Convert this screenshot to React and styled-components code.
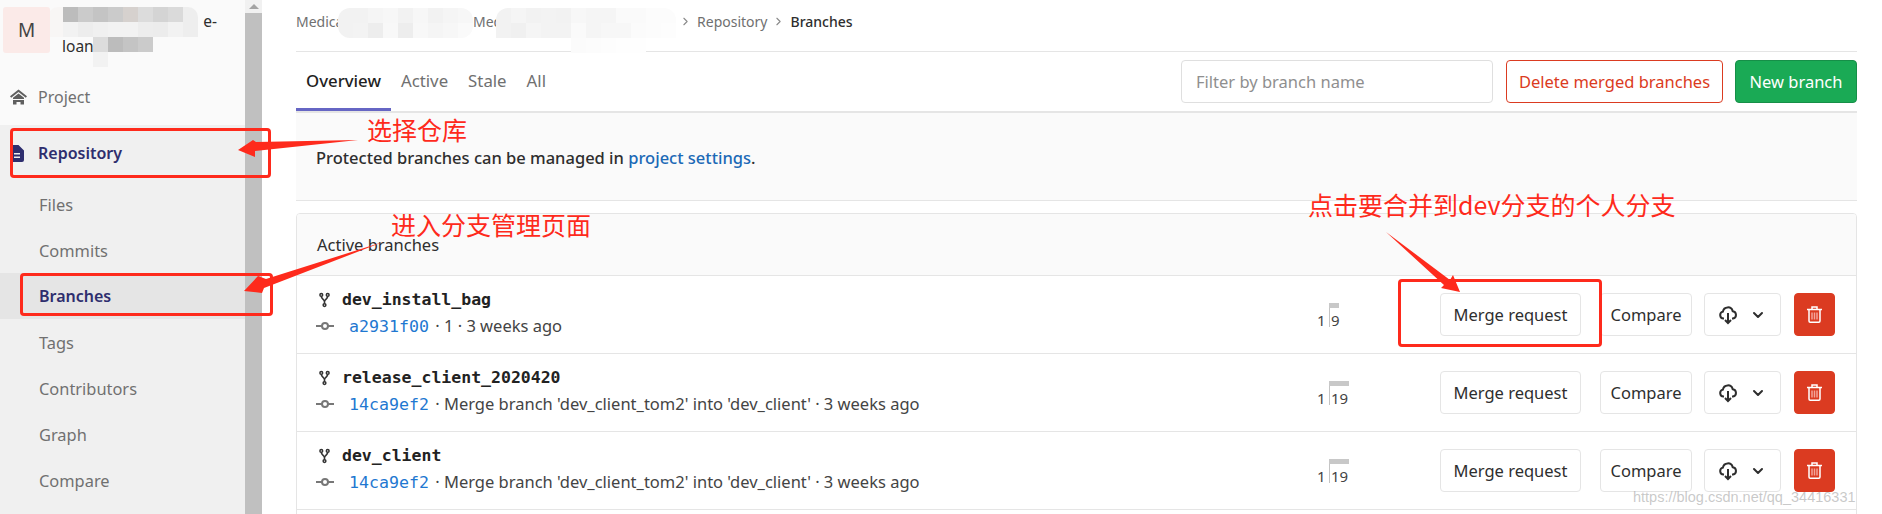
import React from 'react';
import styled, { createGlobalStyle } from 'styled-components';
import { ChevronDown, ChevronRight } from 'lucide-react';

const GlobalStyle = createGlobalStyle`
  html, body {
    margin: 0;
    padding: 0;
    background: #fff;
    overflow: hidden;
  }
  * { box-sizing: border-box; }
`;

const Page = styled.div`
  position: relative;
  display: flex;
  width: 1882px;
  height: 514px;
  overflow: hidden;
  font-family: "Noto Sans", "Open Sans", sans-serif;
  font-size: 16.5px;
  color: #2e2e2e;
`;

const Sidebar = styled.aside`
  width: 245px;
  flex-shrink: 0;
  background: #f0f0f0;
  display: flex;
  flex-direction: column;
`;

const SidebarTop = styled.div`
  height: 125px;
  background: #fafafa;
  padding: 7px 0 0 3px;
`;

const ProjectHead = styled.div`
  display: flex;
  gap: 12px;
  height: 46px;
`;

const Avatar = styled.div`
  position: relative;
  z-index: 1;
  width: 47px;
  height: 46px;
  background: #fbeae8;
  border-radius: 3px;
  display: flex;
  align-items: center;
  justify-content: center;
  font-size: 19px;
  color: #444;
`;

const ProjectName = styled.div`
  width: 155px;
  line-height: 25px;
  padding-top: 2px;
  font-size: 15.5px;
  color: #2e2e2e;
  span { display: block; }
  span:first-child { text-align: right; }
`;

const NavTop = styled.div`
  display: flex;
  align-items: center;
  gap: 11px;
  padding-left: 7px;
  margin-top: 33px;
  font-size: 16px;
  line-height: 22px;
  color: #707070;
`;

const NavHead = styled.div`
  display: flex;
  align-items: center;
  gap: 14px;
  height: 56px;
  padding-left: 10px;
  font-size: 16px;
  font-weight: 600;
  color: #2e2e6e;
`;

const NavList = styled.div`
  display: flex;
  flex-direction: column;
`;

const NavItem = styled.div`
  height: 46px;
  display: flex;
  align-items: center;
  padding-left: 39px;
  font-size: ${p => (p.$active ? 16 : 16.4)}px;
  color: ${p => (p.$active ? '#2e2e6e' : '#707070')};
  font-weight: ${p => (p.$active ? 600 : 400)};
  background: ${p => (p.$active ? '#e5e5e5' : 'transparent')};
`;

const ScrollBar = styled.div`
  width: 17px;
  flex-shrink: 0;
  background: #c0c0c0;
  display: flex;
  flex-direction: column;
`;

const ScrollCap = styled.div`
  height: 13px;
  background: #f1f1f1;
  display: flex;
  align-items: center;
  justify-content: center;
  &::before {
    content: "";
    border-left: 5px solid transparent;
    border-right: 5px solid transparent;
    border-bottom: 5px solid #a3a3a3;
  }
`;

const Main = styled.main`
  width: 1561px;
  margin-left: 34px;
  flex-shrink: 0;
`;

const Breadcrumb = styled.div`
  height: 52px;
  display: flex;
  align-items: center;
  padding-bottom: 8px;
  border-bottom: 1px solid #e5e5e5;
  font-size: 14px;
  color: #707070;
`;

const Crumb = styled.span`
  display: inline-block;
  margin-left: ${p => p.$left || 0}px;
  color: ${p => (p.$current ? '#2e2e2e' : '#707070')};
  font-weight: ${p => (p.$current ? 500 : 400)};
`;

const CrumbArrow = styled.span`
  display: inline-flex;
  color: #8a8a8a;
  margin: 0 5px;
`;

const TabBar = styled.div`
  height: 61px;
  display: flex;
  align-items: flex-start;
  border-bottom: 2px solid #e5e5e5;
`;

const Tabs = styled.nav`
  display: flex;
  flex: 1;
  height: 59px;
`;

const Tab = styled.div`
  height: 59px;
  padding: 17px 10px 0;
  font-size: 16.8px;
  line-height: 24px;
  color: ${p => (p.$active ? '#1f1f1f' : '#707070')};
  font-weight: ${p => (p.$active ? 500 : 400)};
  border-bottom: ${p => (p.$active ? '3px solid #6666c4' : 'none')};
`;

const Tools = styled.div`
  display: flex;
  padding-top: 8px;
`;

const Filter = styled.input`
  width: 312px;
  height: 43px;
  border: 1px solid #dfdfdf;
  border-radius: 4px;
  padding: 0 14px;
  font: inherit;
  margin-right: 13px;
  outline: none;
  &::placeholder { color: #8f8f8f; opacity: 1; }
`;

const ToolButton = styled.button`
  height: 43px;
  width: ${p => p.$width}px;
  margin-left: ${p => p.$gap || 0}px;
  border-radius: 4px;
  font: inherit;
  padding: 0;
  background: ${p => (p.$fill ? '#1aaa55' : '#fff')};
  color: ${p => (p.$fill ? '#fff' : '#db3b21')};
  border: 1px solid ${p => (p.$fill ? '#168f48' : '#db3b21')};
`;

const InfoBar = styled.div`
  height: 88px;
  background: #fafafa;
  border-bottom: 1px solid #e5e5e5;
  padding: 33px 0 0 20px;
  line-height: 24px;
  font-weight: 500;
  color: #2e2e2e;
  a { color: #1b69b6; text-decoration: none; }
`;

const Card = styled.section`
  margin-top: 12px;
  border: 1px solid #e5e5e5;
  border-radius: 4px;
  overflow: hidden;
`;

const CardHead = styled.div`
  height: 62px;
  background: #fafafa;
  border-bottom: 1px solid #e5e5e5;
  padding: 19px 0 0 20px;
  line-height: 24px;
  color: #2e2e2e;
`;

const Row = styled.div`
  height: 78px;
  display: flex;
  align-items: center;
  padding: 0 21px 0 22px;
  border-bottom: 1px solid #e5e5e5;
`;

const BranchInfo = styled.div`
  flex: 1;
  display: flex;
  flex-direction: column;
  gap: 2px;
  margin-top: -4px;
`;

const BranchLine = styled.div`
  display: flex;
  align-items: center;
  height: 24px;
  gap: 12px;
`;

const BranchName = styled.span`
  font-family: "DejaVu Sans Mono", "Liberation Mono", monospace;
  font-weight: 700;
  font-size: 16.5px;
  color: #222;
`;

const CommitLine = styled.div`
  display: flex;
  align-items: center;
  height: 24px;
  margin-left: -3px;
  gap: 15px;
  color: #444;
`;

const Sha = styled.span`
  font-family: "DejaVu Sans Mono", "Liberation Mono", monospace;
  font-size: 16.6px;
  margin-right: 2px;
  color: #1f78d1;
`;

const Divergence = styled.div`
  position: relative;
  width: 34px;
  height: 24px;
  margin-right: 89px;
  padding-top: 10px;
  font-size: 15px;
  line-height: 14px;
  display: flex;
  color: #444;
  letter-spacing: -.2px;
`;

const Behind = styled.span`
  width: 12px;
`;

const Ahead = styled.span`
  border-left: 1px solid #c4c4c4;
  padding-left: 1px;
  margin-top: -10px;
  padding-top: 10px;
  &::before {
    content: "";
    position: absolute;
    top: 0;
    left: 12px;
    height: 5px;
    width: ${p => p.$bar}px;
    background: #c8c8c8;
  }
`;

const Actions = styled.div`
  display: flex;
  align-items: center;
`;

const Action = styled.button`
  height: 43px;
  width: ${p => p.$width}px;
  margin-left: ${p => p.$gap || 0}px;
  display: flex;
  align-items: center;
  justify-content: center;
  gap: 13px;
  border-radius: 4px;
  border: 1px solid ${p => (p.$danger ? '#db3b21' : '#e5e5e5')};
  background: ${p => (p.$danger ? '#db3b21' : '#fff')};
  color: #2e2e2e;
  font: inherit;
  padding: 0;
`;

const Annotations = styled.svg`
  position: absolute;
  left: 0;
  top: 0;
  pointer-events: none;
`;

const RedBox = styled.div`
  position: absolute;
  left: ${p => p.$x}px;
  top: ${p => p.$y}px;
  width: ${p => p.$w}px;
  height: ${p => p.$h}px;
  border: 3px solid #fe2a1c;
  border-radius: 4px;
`;

const RedNote = styled.div`
  position: absolute;
  left: ${p => p.$x}px;
  top: ${p => p.$y}px;
  font-family: "Noto Sans CJK SC", sans-serif;
  font-size: 25px;
  line-height: 32px;
  color: #fe2a1c;
  white-space: nowrap;
`;

const Mosaic = styled.div`
  position: absolute;
  left: ${p => p.$x}px;
  top: ${p => p.$y}px;
  display: grid;
  grid-template-columns: repeat(${p => p.$cols}, 15px);
  grid-auto-rows: 15px;
  border-radius: ${p => p.$round || 0}px;
  overflow: hidden;
`;

const Tile = styled.i`
  background: ${p => p.$c};
`;

const Watermark = styled.div`
  position: absolute;
  left: 1633px;
  top: 487px;
  font-family: "Liberation Sans", Arial, sans-serif;
  font-size: 14.5px;
  line-height: 20px;
  color: rgba(165, 165, 165, .6);
  white-space: nowrap;
`;

const HomeIcon = () => (
  <svg width="17" height="16" viewBox="0 0 17 16" fill="#5f5f5f">
    <path d="M8.5.5 0 7.300l1.200 1.500 7.300-5.800 7.300 5.800L17 7.300z" />
    <path d="M3 8.800 8.500 4.500 14 8.800V10H3zM3 11h11v4.500h-3.500V13h-4v2.500H3z" />
  </svg>
);

const DocIcon = () => (
  <svg width="14" height="17" viewBox="0 0 14 17" fill="#2e2e6e">
    <path fillRule="evenodd" d="M2 0h6.500L14 5.500V15a2 2 0 0 1-2 2H2a2 2 0 0 1-2-2V2a2 2 0 0 1 2-2zm2 8v1.500h6V8H4zm0 3.500V13h6v-1.500H4z" />
  </svg>
);

const ForkIcon = () => (
  <svg width="11" height="16" viewBox="0 0 12 16" fill="none" stroke="#333" strokeWidth="1.700">
    <circle cx="2.500" cy="2.500" r="1.500" />
    <circle cx="9.500" cy="2.500" r="1.500" />
    <circle cx="6" cy="13.500" r="1.500" />
    <path d="M2.500 4c0 3 3.500 3 3.500 6v2M9.500 4c0 3-3.500 3-3.500 6" />
  </svg>
);

const CommitIcon = () => (
  <svg width="18" height="10" viewBox="0 0 18 10" fill="none" stroke="#777" strokeWidth="2">
    <circle cx="9" cy="5" r="3" />
    <path d="M0 5h6M12 5h6" />
  </svg>
);

const CloudIcon = () => (
  <svg width="18" height="20" viewBox="0 0 18 20" fill="none" stroke="#2e2e2e" strokeWidth="2">
    <path d="M5 13.500H4.500a3.500 3.500 0 0 1-.6-6.900 5 5 0 0 1 9.800-.4 3.700 3.700 0 0 1 .3 7.300H13" />
    <path d="M9 8v10M6 15l3 3 3-3" />
  </svg>
);

const TrashIcon = () => (
  <svg width="15" height="17" viewBox="0 0 15 17" fill="none" stroke="#fff" strokeWidth="1.500">
    <path d="M0 3.500h15M5 3V1h5v2M2 4v11a1.200 1.200 0 0 0 1.200 1.200h8.600A1.200 1.200 0 0 0 13 15V4" />
    <path d="M5 6.500v7M7.500 6.500v7M10 6.500v7" stroke="#f3a59a" />
  </svg>
);

const g1 = '#bcbcbc', g2 = '#cbcbcb', g3 = '#c4c4c4', g4 = '#d6d1ce', g5 = '#dcdcdc', g6 = '#ededed', g7 = '#f2f2f2', w = '#f8f6f5', t = 'transparent';

const titleMosaic = [
  w, g1, g2, g3, g2, g4, g5, '#d4d4d4', '#dadada', '#eeeeee',
  w, g7, g6, '#f0f0f0', g7, g7, g6, '#ececec', g7, '#eeeeee',
  t, t, t, g5, g1, g3, g2, t, t, t,
  t, t, t, g7, t, t, t, t, t, t,
];

const crumbMosaic1 = [
  g7, g7, '#f5f5f5', '#f7f7f7', g7, '#f7f7f7', g7, '#f5f5f5', '#f7f7f7',
  g7, '#f3f3f3', g6, '#f8f8f8', g6, '#f8f8f8', '#f5f5f5', '#f7f7f7', '#fafafa',
];

const crumbMosaic2 = [
  g7, '#f5f5f5', g7, '#f3f3f3', g7, '#f7f7f7', '#f5f5f5', '#f5f5f5', '#fafafa', '#fafafa', '#fcfcfc', '#fcfcfc',
  g7, '#f0f0f0', '#f5f5f5', '#f3f3f3', '#f3f3f3', '#fafafa', '#f5f5f5', '#f7f7f7', '#f7f7f7', '#fbfbfb', '#fcfcfc', '#fdfdfd',
  t, t, t, t, t, '#fbfbfb', '#fcfcfc', '#fdfdfd', '#fefefe', '#fefefe', t, t,
];

const navItems = ['Files', 'Commits', 'Branches', 'Tags', 'Contributors', 'Graph', 'Compare'];

const branches = [
  { name: 'dev_install_bag', sha: 'a2931f00', msg: '· 1 · 3 weeks ago', ahead: 9, bar: 10 },
  { name: 'release_client_2020420', sha: '14ca9ef2', msg: "· Merge branch 'dev_client_tom2' into 'dev_client' · 3 weeks ago", ahead: 19, bar: 20 },
  { name: 'dev_client', sha: '14ca9ef2', msg: "· Merge branch 'dev_client_tom2' into 'dev_client' · 3 weeks ago", ahead: 19, bar: 20 },
];

function BranchRow({ branch }) {
  return (
    <Row>
      <BranchInfo>
        <BranchLine>
          <ForkIcon />
          <BranchName>{branch.name}</BranchName>
        </BranchLine>
        <CommitLine>
          <CommitIcon />
          <span><Sha>{branch.sha}</Sha> {branch.msg}</span>
        </CommitLine>
      </BranchInfo>
      <Divergence>
        <Behind>1</Behind>
        <Ahead $bar={branch.bar}>{branch.ahead}</Ahead>
      </Divergence>
      <Actions>
        <Action $width={141}>Merge request</Action>
        <Action $width={92} $gap={19}>Compare</Action>
        <Action $width={77} $gap={12}>
          <CloudIcon />
          <ChevronDown size={16} strokeWidth={3} color="#2e2e2e" />
        </Action>
        <Action $width={41} $gap={13} $danger><TrashIcon /></Action>
      </Actions>
    </Row>
  );
}

export default function App() {
  return (
    <Page>
      <GlobalStyle />
      <Sidebar>
        <SidebarTop>
          <ProjectHead>
            <Avatar>M</Avatar>
            <ProjectName>
              <span>e-</span>
              <span>loan</span>
            </ProjectName>
          </ProjectHead>
          <NavTop><HomeIcon /> Project</NavTop>
        </SidebarTop>
        <NavHead><DocIcon /> Repository</NavHead>
        <NavList>
          {navItems.map(item => (
            <NavItem key={item} $active={item === 'Branches'}>{item}</NavItem>
          ))}
        </NavList>
      </Sidebar>
      <ScrollBar><ScrollCap /></ScrollBar>

      <Main>
        <Breadcrumb>
          <Crumb>Medical</Crumb>
          <Crumb $left={126}>Medical</Crumb>
          <Crumb $left={150} />
          <CrumbArrow><ChevronRight size={13} /></CrumbArrow>
          <Crumb>Repository</Crumb>
          <CrumbArrow><ChevronRight size={13} /></CrumbArrow>
          <Crumb $current>Branches</Crumb>
        </Breadcrumb>
        <TabBar>
          <Tabs>
            <Tab $active>Overview</Tab>
            <Tab>Active</Tab>
            <Tab>Stale</Tab>
            <Tab>All</Tab>
          </Tabs>
          <Tools>
            <Filter placeholder="Filter by branch name" />
            <ToolButton $width={217}>Delete merged branches</ToolButton>
            <ToolButton $width={122} $gap={12} $fill>New branch</ToolButton>
          </Tools>
        </TabBar>
        <InfoBar>Protected branches can be managed in <a href="#settings">project settings</a>.</InfoBar>
        <Card>
          <CardHead>Active branches</CardHead>
          {branches.map(b => <BranchRow key={b.name} branch={b} />)}
          <Row />
        </Card>
      </Main>

      <Mosaic $x={48} $y={7} $cols={10} $round={10}>
        {titleMosaic.map((c, i) => <Tile key={i} $c={c} />)}
      </Mosaic>
      <Mosaic $x={338} $y={8} $cols={9} $round={12}>
        {crumbMosaic1.map((c, i) => <Tile key={i} $c={c} />)}
      </Mosaic>
      <Mosaic $x={496} $y={8} $cols={12} $round={12}>
        {crumbMosaic2.map((c, i) => <Tile key={i} $c={c} />)}
      </Mosaic>

      <RedBox $x={10} $y={128} $w={261} $h={50} />
      <RedBox $x={20} $y={273} $w={253} $h={43} />
      <RedBox $x={1398} $y={279} $w={204} $h={68} />

      <Annotations width="1882" height="514" viewBox="0 0 1882 514">
        <polygon fill="#fe2a1c" points="358,140 256,142 253,140 238,150 255,157 255,151" />
        <polygon fill="#fe2a1c" points="383,242 266,279 258,276 244,291 262,293 264,288" />
        <polygon fill="#fe2a1c" points="1386,232 1450,280 1453,275 1460,292 1441,288 1444,285" />
      </Annotations>

      <RedNote $x={367} $y={113}>选择仓库</RedNote>
      <RedNote $x={391} $y={208}>进入分支管理页面</RedNote>
      <RedNote $x={1308} $y={188}>点击要合并到dev分支的个人分支</RedNote>

      <Watermark>https://blog.csdn.net/qq_34416331</Watermark>
    </Page>
  );
}
